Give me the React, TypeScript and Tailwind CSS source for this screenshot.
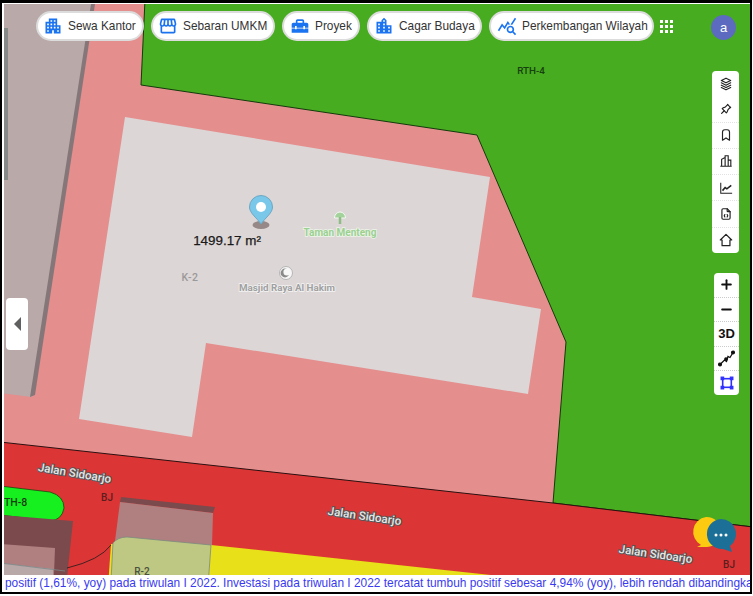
import { MdApartment, MdOutlineStorefront, MdHomeRepairService, MdLocationCity, MdOutlineQueryStats } from "react-icons/md";
import { TbStack3, TbPin, TbBookmark, TbFileCode, TbPlus, TbMinus } from "react-icons/tb";

const pills = [
  { label: "Sewa Kantor", Icon: MdApartment, cls: "w-[108px] pl-[5px]" },
  { label: "Sebaran UMKM", Icon: MdOutlineStorefront, cls: "w-[124px] pl-[5px]" },
  { label: "Proyek", Icon: MdHomeRepairService, cls: "w-[78px] pl-[6px]" },
  { label: "Cagar Budaya", Icon: MdLocationCity, cls: "w-[115px] pl-[5px]" },
  { label: "Perkembangan Wilayah", Icon: MdOutlineQueryStats, cls: "w-[165px] pl-[6px]" },
];

function TowerIcon() {
  return (
    <svg className="w-[14px] h-[14px]" viewBox="0 0 16 16" fill="none" stroke="#222" strokeWidth="1.3">
      <path d="M1.5,14 H14.5 M3,14 V6 L7,4 M7,14 V2 H10.5 V14 M10.5,7 H13.5 V14" />
    </svg>
  );
}
function ChartIcon() {
  return (
    <svg className="w-[14px] h-[14px]" viewBox="0 0 16 16" fill="none" stroke="#222">
      <path d="M2,2 V14 H15" strokeWidth="1.2" />
      <path d="M4,11 L7,7.5 L9,9 L14,5" strokeWidth="1.8" />
    </svg>
  );
}
function HomeIcon() {
  return (
    <svg className="w-[14px] h-[14px]" viewBox="0 0 16 16" fill="none" stroke="#222" strokeWidth="1.4">
      <path d="M8,1.5 L14.5,8 H12.5 V14.5 H3.5 V8 H1.5 Z" strokeLinejoin="round" />
    </svg>
  );
}
function StackIcon() {
  return <TbStack3 className="w-[14px] h-[14px]" />;
}
function PinIcon() {
  return <TbPin className="w-[14px] h-[14px]" />;
}
function BookmarkIcon() {
  return <TbBookmark className="w-[14px] h-[14px]" />;
}
function FileIcon() {
  return <TbFileCode className="w-[14px] h-[14px]" />;
}

const tools = [StackIcon, PinIcon, BookmarkIcon, TowerIcon, ChartIcon, FileIcon, HomeIcon];

function Street({ x, y, r }: { x: number; y: number; r: number }) {
  return (
    <text
      x={x}
      y={y}
      transform={`rotate(${r} ${x} ${y})`}
      textAnchor="middle"
      fontFamily="Roboto, sans-serif"
      fontWeight="500"
      fontSize="11.6"
      fill="#e6e6e6"
      stroke="#555"
      strokeWidth="2"
      paintOrder="stroke"
    >
      Jalan Sidoarjo
    </text>
  );
}

function MapLayer() {
  const label = { fontFamily: "Roboto, sans-serif", fontWeight: 500, textAnchor: "middle" as const };
  return (
    <svg className="absolute inset-0 w-full h-full" viewBox="0 0 753 596">
      <rect x="0" y="0" width="753" height="596" fill="#e48e8e" />
      <polygon points="145,0 141,85 477,135 566,342 553,503 753,527 753,0" fill="#47ac1f" stroke="#123a0c" strokeWidth="1" />
      <polygon points="0,0 93,0 32,397 0,393" fill="#b9a9a9" />
      <polygon points="91,4 95,4 35,395 30,397" fill="#857779" />
      <rect x="0" y="28" width="8" height="152" fill="#858a88" />
      <polygon points="125,117 490,177 472,297 541,309 528,394 206,343 192,437 79,419" fill="#ddd6d6" />
      <polygon points="0,442 553,503 753,527 753,600 0,600" fill="#dc3535" stroke="#2a1010" strokeWidth="1" />
      <path d="M0,486 L50,492 Q64,496 64,508 Q62,520 50,521 L0,515 Z" fill="#16f01f" stroke="#123a0c" strokeWidth="0.7" />
      <polygon points="0,515 73,521 68,568 65,600 0,600" fill="#7b4a4c" />
      <polygon points="0,544 55,548 53,600 0,600" fill="#b07f7f" />
      <polygon points="0,563 53,569 53,600 0,600" fill="#b8a8a8" />
      <path d="M0,563 L65,571" stroke="#7a8a8a" strokeWidth="0.8" />
      <polygon points="121,497 215,507 213,513 120,502" fill="#7b4a4c" />
      <polygon points="120,502 213,513 212,546 115,541" fill="#b07f7f" />
      <path d="M111,544 L107,600 L724,600 L211,545 Z" fill="#e8e018" />
      <path d="M113,543 Q118,537 127,537 L211,545 L207,600 L110,600 Z" fill="#bfc882" stroke="#7a8a80" strokeWidth="0.8" />
      <path d="M111,545 Q100,560 67,568" fill="none" stroke="#1c1c1c" strokeWidth="0.8" />
      <text x="531" y="74" {...label} fontSize="9.8" fill="#16400f">RTH-4</text>
      <text x="190" y="281" {...label} fontSize="10.5" letterSpacing="0.5" fill="#9a9a9a">K-2</text>
      <text x="12.5" y="506" {...label} fontSize="10.5" fill="#173d12">RTH-8</text>
      <text x="107" y="501" {...label} fontSize="10" fill="#5c1d1d">BJ</text>
      <text x="729" y="568" {...label} fontSize="10" fill="#5c1d1d">BJ</text>
      <text x="142" y="575" {...label} fontSize="10" fill="#4a5240">R-2</text>
      <Street x={74} y={477} r={9.5} />
      <Street x={364} y={520} r={8} />
      <Street x={655} y={558} r={8} />
      <text x="340" y="236" {...label} fontSize="10" fontWeight="700" fill="#9bd091" stroke="#eef5ea" strokeWidth="1.5" paintOrder="stroke">Taman Menteng</text>
      <text x="287" y="291" {...label} fontSize="9.8" fontWeight="700" fill="#a0a0a0" stroke="#f4f4f4" strokeWidth="1.5" paintOrder="stroke">Masjid Raya Al Hakim</text>
      <path d="M334.5,218 a5.5,6 0 1 1 11,0 Z" fill="#a3d39a" stroke="#f4f8f2" strokeWidth="1" />
      <path d="M340,217 V224" stroke="#8fbc85" strokeWidth="2.5" />
      <circle cx="286" cy="273" r="6.5" fill="#f7f7f7" stroke="#b5b5b5" strokeWidth="1" />
      <circle cx="285" cy="273" r="4.4" fill="#8a8a8a" />
      <circle cx="287" cy="272" r="3.6" fill="#f7f7f7" />
      <ellipse cx="261" cy="225" rx="8.5" ry="4" fill="#8a7a78" opacity="0.85" />
      <path d="M261,224 C256,217 249.5,213 249.5,207 A11.5,11.5 0 0 1 272.5,207 C272.5,213 266,217 261,224 Z" fill="#79c7e9" stroke="#6ea8c2" strokeWidth="1" />
      <circle cx="261" cy="207" r="5" fill="#ffffff" />
      <text x="227" y="245" textAnchor="middle" fontFamily="'Liberation Sans', sans-serif" fontSize="13.4" fill="#1a1a1a" stroke="#1a1a1a" strokeWidth="0.25">1499.17 m²</text>
    </svg>
  );
}

function ChatBubbles() {
  return (
    <svg className="w-[48px] h-[42px]" viewBox="0 0 48 42">
      <path d="M16,3 a15,15 0 0 1 1,30 L7,33 L11,31 A15,15 0 0 1 16,3 Z" fill="#fccb11" />
      <path d="M31,5 a15,15 0 1 0 2,30 L42,38 L40,32 A15,15 0 0 0 31,5 Z" fill="#1c6f96" />
      <circle cx="26" cy="21" r="1.5" fill="#fff" />
      <circle cx="31" cy="21" r="1.5" fill="#fff" />
      <circle cx="36" cy="21" r="1.5" fill="#fff" />
    </svg>
  );
}

export default function App() {
  return (
    <div className="relative w-[753px] h-[596px] overflow-hidden bg-white font-['Liberation_Sans',sans-serif]">
      <div className="absolute left-0 top-0 w-[752px] h-[594px] border-l-[2px] border-t-[3px] border-r-[2px] border-b-[2px] border-black bg-white pl-[2px] pt-[1px] overflow-hidden flex flex-col">
        <div className="relative flex-1 overflow-hidden">
          <div className="absolute -left-[4px] -top-[4px] w-[753px] h-[596px]">
            <MapLayer />
          </div>
        </div>
        <div className="h-[17px] shrink-0 bg-white text-[11.9px] leading-[17px] text-[#3a3af0] whitespace-nowrap overflow-hidden pl-[1px]">
          positif (1,61%, yoy) pada triwulan I 2022. Investasi pada triwulan I 2022 tercatat tumbuh positif sebesar 4,94% (yoy), lebih rendah dibandingkan
        </div>
      </div>

      <div className="absolute left-[36px] top-[11px] flex items-center gap-[7px]">
        {pills.map(({ label, Icon, cls }) => (
          <div key={label} className={`${cls} h-[30px] rounded-full bg-white border-2 border-[#dcdcdc] flex items-center gap-[5px] text-[11.85px] text-[#333] whitespace-nowrap`}>
            <Icon className="w-[20px] h-[20px] text-[#1a73f0] shrink-0" />
            <span className="mt-[1px]">{label}</span>
          </div>
        ))}
        <div className="grid grid-cols-3 gap-[2px] ml-[-1px] mt-[1px]">
          {Array.from({ length: 9 }).map((_, i) => (
            <div key={i} className="w-[3px] h-[3px] bg-white" />
          ))}
        </div>
      </div>

      <div className="absolute left-[711px] top-[15px] w-[25px] h-[25px] rounded-full bg-[#5c6bc0] text-white text-[13px] flex items-center justify-center">a</div>

      <div className="absolute left-[712px] top-[71px] w-[27px] h-[182px] bg-white rounded-[4px] flex flex-col">
        {tools.map((Icon, i) => (
          <div key={i} className={`flex-1 flex items-center justify-center text-[#222] ${i > 0 && i < 6 ? "border-b border-dotted border-[#e2e2e2]" : ""}`}>
            <Icon />
          </div>
        ))}
      </div>

      <div className="absolute left-[714px] top-[273px] w-[25px] h-[122px] bg-white rounded-[4px] flex flex-col text-[#111]">
        <div className="flex-1 flex items-center justify-center border-b border-dotted border-[#ccc]"><TbPlus className="w-[15px] h-[15px]" strokeWidth={3} /></div>
        <div className="flex-1 flex items-center justify-center border-b border-dotted border-[#ccc]"><TbMinus className="w-[15px] h-[15px]" strokeWidth={3} /></div>
        <div className="flex-1 flex items-center justify-center border-b border-dotted border-[#ccc] text-[13px] font-bold">3D</div>
        <div className="flex-1 flex items-center justify-center border-b border-dotted border-[#ccc]">
          <svg className="w-[17px] h-[17px]" viewBox="0 0 17 17" fill="none" stroke="#111" strokeWidth="1.3">
            <path d="M2,14.5 L6.5,10 L8.5,11.5 L10,6.5 L12,7.5 L15,2.5" />
            <circle cx="2" cy="14.5" r="1.4" fill="#111" />
            <circle cx="8" cy="9" r="1.2" fill="#111" />
            <circle cx="15" cy="2.5" r="1.4" fill="#111" />
          </svg>
        </div>
        <div className="flex-1 flex items-center justify-center">
          <svg className="w-[14px] h-[14px]" viewBox="0 0 13 13" fill="#3030ff" stroke="#3030ff">
            <rect x="2.5" y="2.5" width="8" height="8" fill="none" strokeWidth="1.5" />
            <rect x="1" y="1" width="2.4" height="2.4" />
            <rect x="9.6" y="1" width="2.4" height="2.4" />
            <rect x="1" y="9.6" width="2.4" height="2.4" />
            <rect x="9.6" y="9.6" width="2.4" height="2.4" />
          </svg>
        </div>
      </div>

      <div className="absolute left-[6px] top-[298px] w-[22px] h-[52px] bg-white rounded-[4px] flex items-center justify-center">
        <svg className="w-[7px] h-[14px]" viewBox="0 0 7 14"><path d="M7,0 V14 L0,7 Z" fill="#606060" /></svg>
      </div>

      <div className="absolute left-[690px] top-[514px]">
        <ChatBubbles />
      </div>
    </div>
  );
}
